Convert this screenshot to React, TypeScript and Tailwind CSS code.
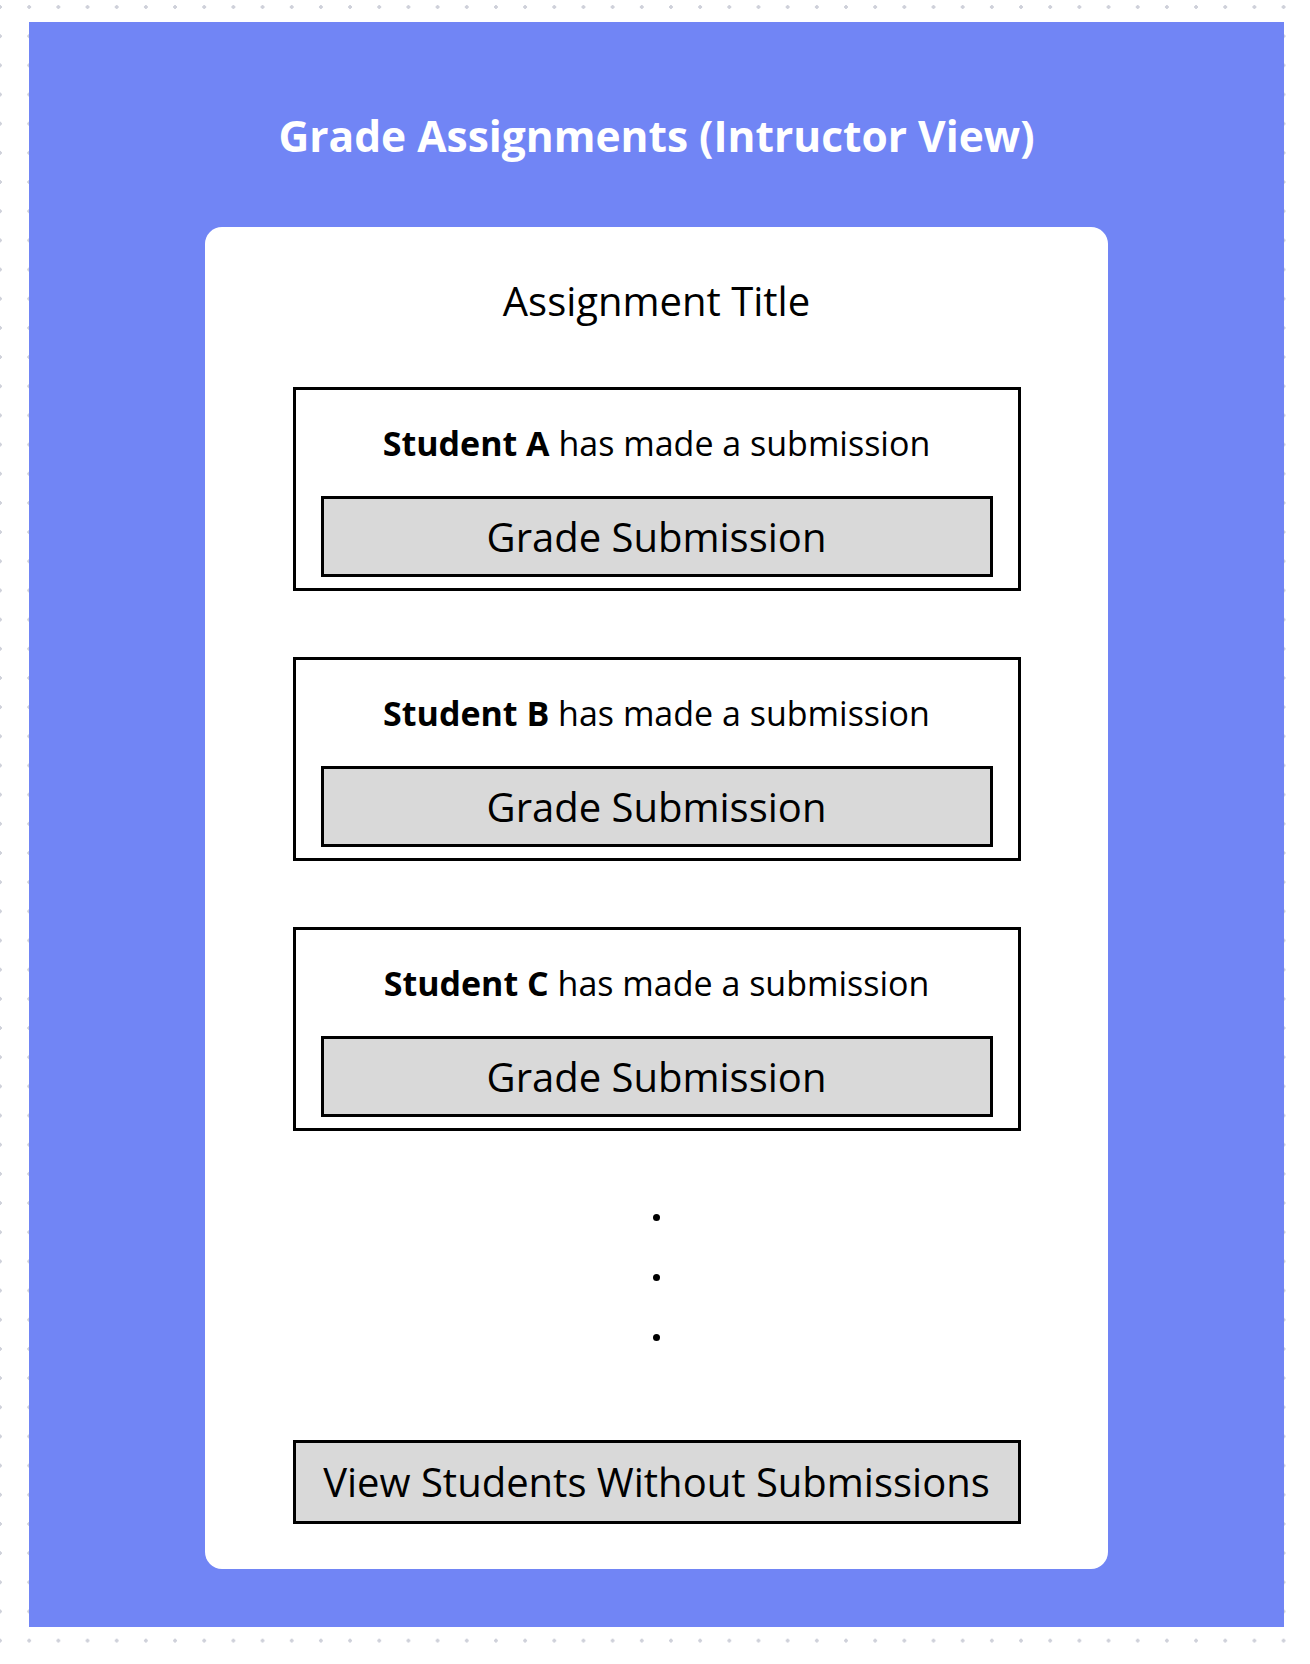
const students = ["Student A", "Student B", "Student C"];

const SubmissionCard = ({ name }: { name: string }) => (
  <div className="flex w-[728px] h-[204px] flex-col border-[3px] border-black px-[25px] pt-[31px]">
    <p className="h-[44px] text-center text-[34px] leading-[44px] text-black">
      <span className="font-bold">{name}</span> has made a submission
    </p>
    <button className="mt-[31px] flex h-[81px] w-full items-center justify-center border-[3px] border-black bg-[#d9d9d9] text-[40px] text-black">
      Grade Submission
    </button>
  </div>
);

export default function App() {
  return (
    <div className="min-h-[1664px] w-[1310px] bg-white bg-[radial-gradient(circle,#cfd1da_1.7px,transparent_1.9px)] bg-[length:29.18px_29.18px] bg-[position:-14.59px_-7.59px] pt-[22px] pl-[29px] font-['Open_Sans',sans-serif]">
      <div className="flex h-[1605px] w-[1255px] flex-col items-center bg-[#7185f5] pt-[84px]">
        <h1 className="h-[60px] text-[42.5px] font-bold leading-[60px] text-white">
          Grade Assignments (Intructor View)
        </h1>

        <div className="mt-[61px] flex h-[1342px] w-[903px] flex-col items-center rounded-[17px] bg-white pt-[46px]">
          <h2 className="h-[56px] text-[40px] leading-[56px] text-black">Assignment Title</h2>

          <div className="mt-[58px] flex flex-col gap-[66px]">
            {students.map((s) => (
              <SubmissionCard key={s} name={s} />
            ))}
          </div>

          <div className="mt-[83px] flex flex-col items-center gap-[53px]">
            <span className="size-[7px] rounded-full bg-black" />
            <span className="size-[7px] rounded-full bg-black" />
            <span className="size-[7px] rounded-full bg-black" />
          </div>

          <button className="mt-[99px] flex h-[84px] w-[728px] items-center justify-center border-[3px] border-black bg-[#d9d9d9] text-[40px] text-black">
            View Students Without Submissions
          </button>
        </div>
      </div>
    </div>
  );
}
